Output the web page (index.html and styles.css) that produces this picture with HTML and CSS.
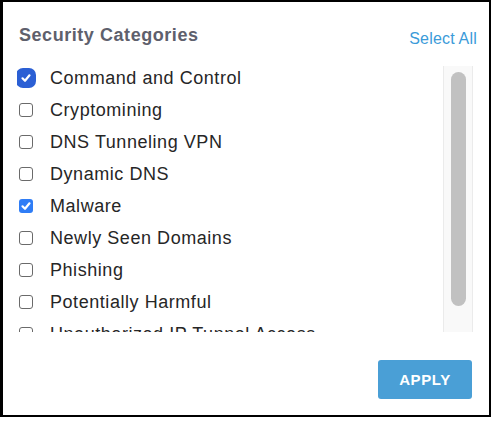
FILE: index.html
```html
<!DOCTYPE html>
<html>
<head>
<meta charset="utf-8">
<link rel="stylesheet" href="styles.css">
</head>
<body>
<div class="panel">
  <div class="header">
    <div class="title">Security Categories</div>
    <div class="select-all">Select All</div>
  </div>
  <div class="list">
    <div class="items">
      <div class="item"><span class="box checked focused"><svg viewBox="0 0 14 14"><polyline points="3.5,7.3 6,9.8 10.5,4.3"/></svg></span><span class="label">Command and Control</span></div>
      <div class="item"><span class="box"></span><span class="label">Cryptomining</span></div>
      <div class="item"><span class="box"></span><span class="label">DNS Tunneling VPN</span></div>
      <div class="item"><span class="box"></span><span class="label">Dynamic DNS</span></div>
      <div class="item"><span class="box checked"><svg viewBox="0 0 14 14"><polyline points="3.5,7.3 6,9.8 10.5,4.3"/></svg></span><span class="label">Malware</span></div>
      <div class="item"><span class="box"></span><span class="label">Newly Seen Domains</span></div>
      <div class="item"><span class="box"></span><span class="label">Phishing</span></div>
      <div class="item"><span class="box"></span><span class="label">Potentially Harmful</span></div>
      <div class="item"><span class="box"></span><span class="label">Unauthorized IP Tunnel Access</span></div>
    </div>
    <div class="track"><div class="thumb"></div></div>
  </div>
  <div class="footer">
    <button class="apply">APPLY</button>
  </div>
</div>
</body>
</html>
```
FILE: styles.css
```css
html, body {
  margin: 0;
  padding: 0;
  background: #ffffff;
}
body {
  font-family: "Liberation Sans", Arial, sans-serif;
}
.panel {
  box-sizing: border-box;
  width: 491px;
  height: 417px;
  border: 2px solid #000;
  border-left-width: 3px;
  padding: 22px 16px 0 14px;
  display: flex;
  flex-direction: column;
}
.header {
  display: flex;
  justify-content: space-between;
  align-items: flex-start;
  padding-left: 2px;
  height: 22px;
}
.title {
  font-size: 18px;
  line-height: 22px;
  font-weight: bold;
  color: #5e606c;
  letter-spacing: 0.55px;
}
.select-all {
  font-size: 16px;
  line-height: 20px;
  color: #3b9bd9;
  margin-top: 5px;
  margin-right: -4px;
  letter-spacing: 0.2px;
}
.list {
  margin-top: 20px;
  height: 266px;
  display: flex;
}
.items {
  flex: 1;
  overflow: hidden;
}
.item {
  height: 32px;
  display: flex;
  align-items: flex-start;
  white-space: nowrap;
}
.box {
  box-sizing: border-box;
  flex: none;
  width: 14px;
  height: 14px;
  margin: 5px 0 0 2px;
  border: 1.6px solid #6a6a6a;
  border-radius: 3px;
  display: flex;
  align-items: center;
  justify-content: center;
}
.box svg {
  width: 14px;
  height: 14px;
}
.box svg polyline {
  fill: none;
  stroke: #fff;
  stroke-width: 2.2;
  stroke-linecap: round;
  stroke-linejoin: round;
}
.box.checked {
  background: #2f7df6;
  border: none;
}
.box.focused {
  background: #2b5fd4;
  box-shadow: 0 0 0 3px #2b5fd4;
  border-radius: 4px;
}
.label {
  margin-left: 17px;
  margin-top: 1px;
  font-size: 18px;
  line-height: 22px;
  color: #262626;
  letter-spacing: 0.55px;
}
.track {
  box-sizing: border-box;
  width: 30px;
  height: 266px;
  background: #f9f9f9;
  border-left: 1px solid #ebebeb;
  border-right: 1px solid #ebebeb;
  padding: 6px 0 0 7px;
}
.thumb {
  width: 15px;
  height: 234px;
  background: #c1c1c1;
  border-radius: 8px;
}
.footer {
  display: flex;
  justify-content: flex-end;
  margin-top: 28px;
  padding-right: 1px;
}
.apply {
  width: 94px;
  height: 39px;
  border: none;
  border-radius: 3px;
  background: #4a9fd6;
  color: #fff;
  font-family: "Liberation Sans", Arial, sans-serif;
  font-weight: bold;
  font-size: 15px;
  letter-spacing: 0.6px;
  padding: 0;
}
```
